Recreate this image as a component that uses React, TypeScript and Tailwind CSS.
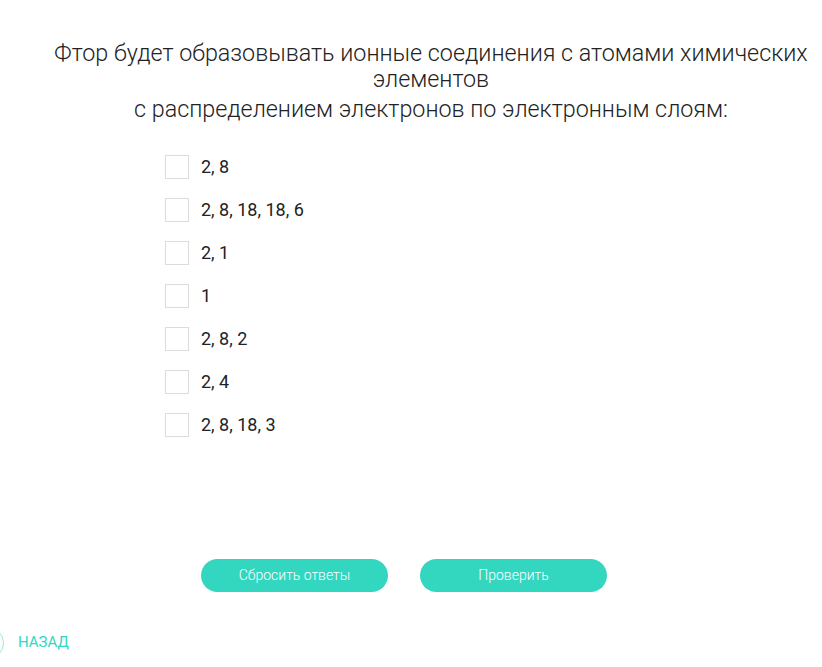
const options = ["2, 8", "2, 8, 18, 18, 6", "2, 1", "1", "2, 8, 2", "2, 4", "2, 8, 18, 3"];

export default function App() {
  return (
    <div className="relative w-[822px] h-[667px] overflow-hidden bg-white font-['Roboto',sans-serif]">
      {/* Question */}
      <div className="pt-[40px] pl-[40px] text-center text-[23.3px] font-light text-[#222] leading-[26px]">
        <p>Фтор будет образовывать ионные соединения с атомами химических</p>
        <p>элементов</p>
        <p className="mt-[4px]">с распределением электронов по электронным слоям:</p>
      </div>

      {/* Options */}
      <div className="mt-[33px] ml-[165px] flex flex-col gap-[19px]">
        {options.map((o) => (
          <label key={o} className="flex items-center gap-[12px] cursor-pointer">
            <span className="w-[24px] h-[24px] border border-[#dcdcdc] bg-white shrink-0" />
            <span className="text-[18px] text-[#222] leading-[24px]">{o}</span>
          </label>
        ))}
      </div>

      {/* Buttons */}
      <div className="mt-[122px] ml-[201px] flex gap-[32px]">
        <button className="w-[187px] h-[33px] rounded-full bg-[#33d6bf] text-white text-[14px] font-light">
          Сбросить ответы
        </button>
        <button className="w-[187px] h-[33px] rounded-full bg-[#33d6bf] text-white text-[14px] font-light">
          Проверить
        </button>
      </div>

      {/* Back */}
      <div className="mt-[39px] flex items-center">
        <span className="absolute left-[-28px] top-[627px] w-[32px] h-[32px] rounded-full border border-[#9fe7db]" />
        <span className="ml-[18px] text-[15px] text-[#33d6bf]">НАЗАД</span>
      </div>
    </div>
  );
}
